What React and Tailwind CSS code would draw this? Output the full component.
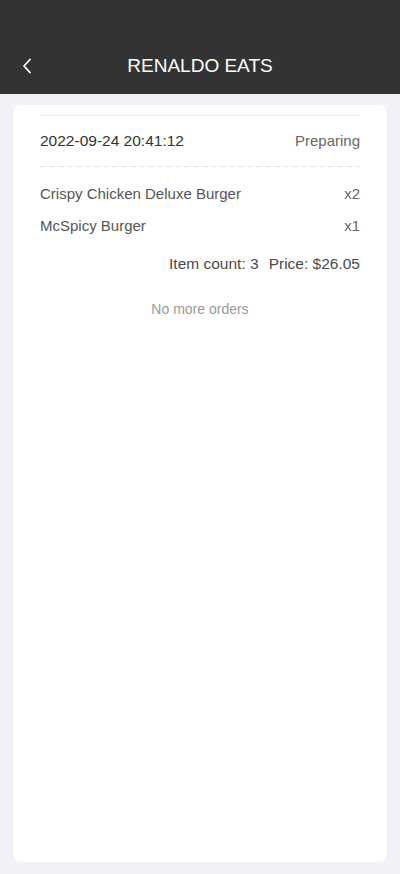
import React from 'react';

const items = [
  { name: 'Crispy Chicken Deluxe Burger', qty: 2 },
  { name: 'McSpicy Burger', qty: 1 },
];

const App = () => {
  return (
    <div className="min-h-[874px] bg-[#f2f2f6] font-['Liberation_Sans',Arial,sans-serif]">
      <header className="bg-[#333333] pt-[38px]">
        <div className="relative flex h-[56px] items-center justify-center">
          <button className="absolute left-[18px] top-1/2 -translate-y-1/2 p-1 text-white">
            <svg width="10" height="16" viewBox="0 0 10 16" fill="none">
              <path d="M8 1.5L2 8l6 6.5" stroke="currentColor" strokeWidth="1.8" strokeLinecap="round" strokeLinejoin="round" />
            </svg>
          </button>
          <h1 className="text-[19px] text-white">RENALDO EATS</h1>
        </div>
      </header>

      <main className="px-[13px] pt-[11px] pb-[12px]">
        <div className="h-[757px] rounded-lg bg-white px-[27px] pt-[10px]">
          <div className="border-t border-[#e9e9ec]">
            <div className="flex h-[50px] items-center justify-between text-[15.5px]">
              <span className="text-[#333]">2022-09-24 20:41:12</span>
              <span className="text-[15px] text-[#666]">Preparing</span>
            </div>
            <div className="h-px bg-[repeating-linear-gradient(to_right,#e6e6e9_0,#e6e6e9_6px,transparent_6px,transparent_9px)]" />

            <ul className="pt-[11px]">
              {items.map((item) => (
                <li key={item.name} className="flex h-[32px] items-center justify-between text-[15px] text-[#555]">
                  <span>{item.name}</span>
                  <span className="text-[#666]">x{item.qty}</span>
                </li>
              ))}
            </ul>

            <div className="mt-[6px] flex h-[32px] items-center justify-end text-[15.5px] text-[#4a4a4a]">
              <span>Item count: 3</span>
              <span className="ml-[10px]">Price: $26.05</span>
            </div>
          </div>

          <p className="mt-[19px] text-center text-[14px] text-[#999]">No more orders</p>
        </div>
      </main>
    </div>
  );
};

export default App;
